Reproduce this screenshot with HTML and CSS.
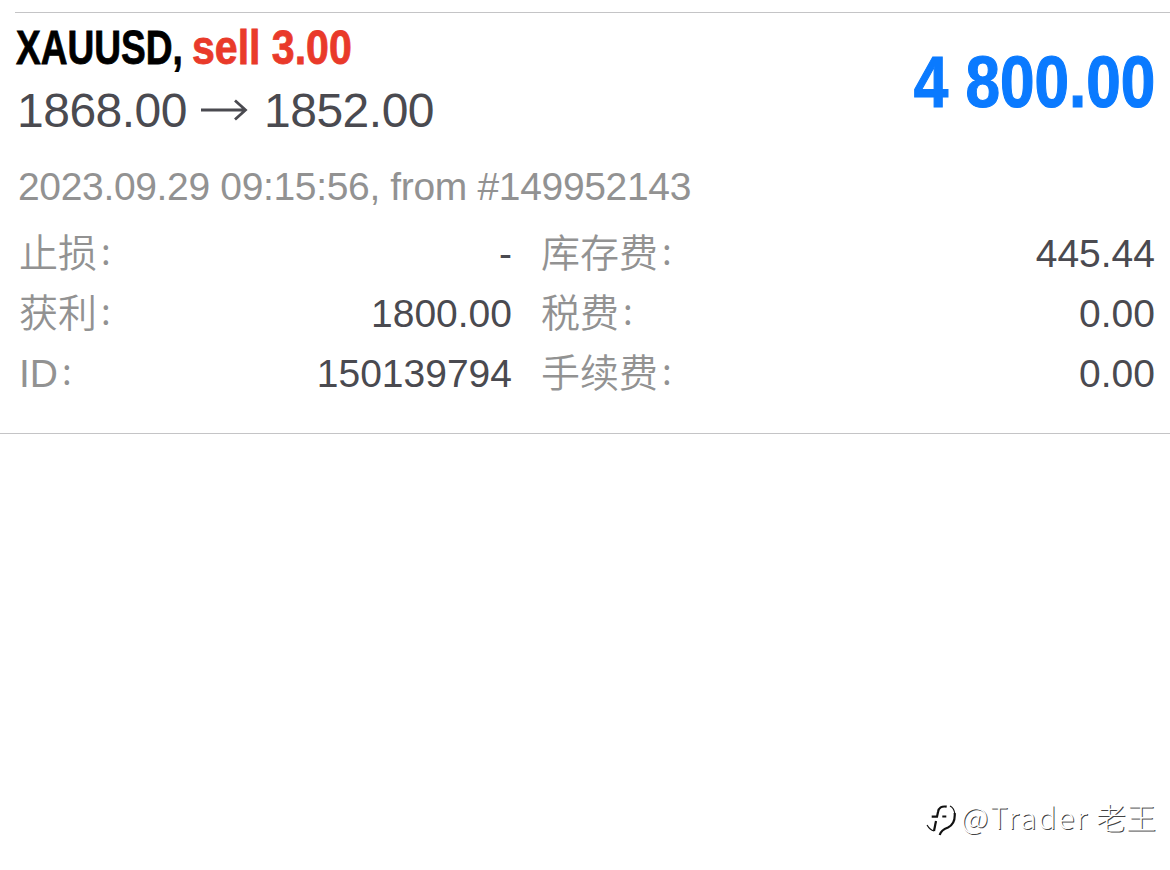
FILE: index.html
```html
<!DOCTYPE html>
<html lang="zh-CN">
<head>
    <meta charset="UTF-8">
    <title>XAUUSD</title>
    <link rel="stylesheet" href="styles.css">
</head>
<body>
<main class="deal">
    <header class="deal-head">
        <div>
            <h1 class="symbol"><span class="symbol-name">XAUUSD,</span><span class="side">sell 3.00</span></h1>
            <div class="prices">
                <span>1868.00</span>
                <svg class="arrow" viewBox="0 0 47 24"><path d="M0 12H45M34 2.5L44.5 12L34 21.5"/></svg>
                <span>1852.00</span>
            </div>
        </div>
        <div class="profit">4 800.00</div>
    </header>
    <p class="meta">2023.09.29 09:15:56, from #149952143</p>
    <dl class="details">
        <dt>止损<span class="colon">:</span></dt><dd class="left">-</dd>
        <dt>库存费<span class="colon">:</span></dt><dd>445.44</dd>
        <dt>获利<span class="colon">:</span></dt><dd class="left">1800.00</dd>
        <dt>税费<span class="colon">:</span></dt><dd>0.00</dd>
        <dt>ID<span class="colon">:</span></dt><dd class="left">150139794</dd>
        <dt>手续费<span class="colon">:</span></dt><dd>0.00</dd>
    </dl>
</main>
<footer class="watermark">
    <svg class="logo" viewBox="0 0 30 34">
        <path d="M20.7 2.7Q13 1.5 12 8L11 12.7H5.7M16.3 12.5H20.3"/>
        <path d="M10 17L8 27"/>
        <path class="thin" d="M8 27Q4 26 1 21M24 2Q28 4 28.7 9"/>
        <path d="M28.7 9Q29.5 20 22 23.5Q15 26 13.7 31"/>
    </svg>
    <span class="author">@Trader</span>
    <span>老王</span>
</footer>
</body>
</html>
```
FILE: styles.css
```css
body {
    margin: 0;
    min-height: 870px;
    display: flex;
    flex-direction: column;
    justify-content: space-between;
    background: #fff;
    color: #4a4a50;
    font-family: "Liberation Sans", "Noto Sans CJK SC", sans-serif;
    overflow: hidden;
}

.deal {
    height: 421px;
    padding: 12px 0 0;
    border-bottom: 1px solid #c4c4c6;
}

.deal-head {
    display: flex;
    justify-content: space-between;
    height: 144px;
    margin-left: 15px;
    padding-right: 15px;
    border-top: 1px solid #c4c4c6;
}

.symbol {
    display: flex;
    margin: 0;
    padding-top: 7px;
    font-size: 48px;
    line-height: 56px;
    white-space: nowrap;
    color: #000;
    -webkit-text-stroke: 0.8px #000;
}

/* condensed bold */
.symbol-name {
    width: 176px;
    margin-left: 1px;
    transform: scaleX(0.772);
    transform-origin: left;
}

.side {
    color: #e93a2a;
    transform: scaleX(0.855);
    transform-origin: left;
    -webkit-text-stroke: 0.8px #e93a2a;
}

.prices {
    display: flex;
    align-items: center;
    padding-left: 2px;
    font-size: 48px;
    line-height: 70px;
    letter-spacing: -0.5px;
}

.arrow {
    width: 47px;
    height: 24px;
    margin: 0 16px 2px 14px;
    fill: none;
    stroke: #4a4a50;
    stroke-width: 2.8;
}

.profit {
    padding-top: 28px;
    font-size: 72px;
    font-weight: bold;
    line-height: 82px;
    color: #0a7aff;
    transform: scaleX(0.862);
    transform-origin: right;
    -webkit-text-stroke: 1.2px #0a7aff;
}

.meta {
    margin: 0;
    padding-left: 18px;
    font-size: 39px;
    line-height: 60px;
    letter-spacing: -0.34px;
    color: #929292;
}

.details {
    display: grid;
    grid-template-columns: 200px 322px 200px 1fr;
    grid-auto-rows: 60px;
    margin: 7px 15px 0 19px;
    font-size: 39px;
    line-height: 60px;
}

.details dt {
    color: #929292;
    font-weight: 350;
    white-space: nowrap;
}

.details dd {
    margin: 0;
    text-align: right;
}

.details .left {
    padding-right: 29px;
}

.colon {
    margin-left: 4px;
    font-family: "Noto Sans CJK SC", sans-serif;
    font-size: 36px;
    line-height: 1;
    vertical-align: 2px;
}

.watermark {
    display: flex;
    justify-content: flex-end;
    align-items: center;
    padding: 0 14px 32px 0;
    font-family: "Noto Sans CJK SC", sans-serif;
    font-size: 30px;
    font-weight: 300;
    line-height: 44px;
    color: #fff;
    text-shadow: 1px 1px 0 #444;
}

.author {
    width: 135px;
    letter-spacing: 1.9px;
}

.logo {
    width: 30px;
    height: 34px;
    margin: 10px 5px 0 0;
    fill: none;
    stroke: #111;
    stroke-width: 2.2;
}

.logo .thin {
    stroke-width: 1.2;
}
```
